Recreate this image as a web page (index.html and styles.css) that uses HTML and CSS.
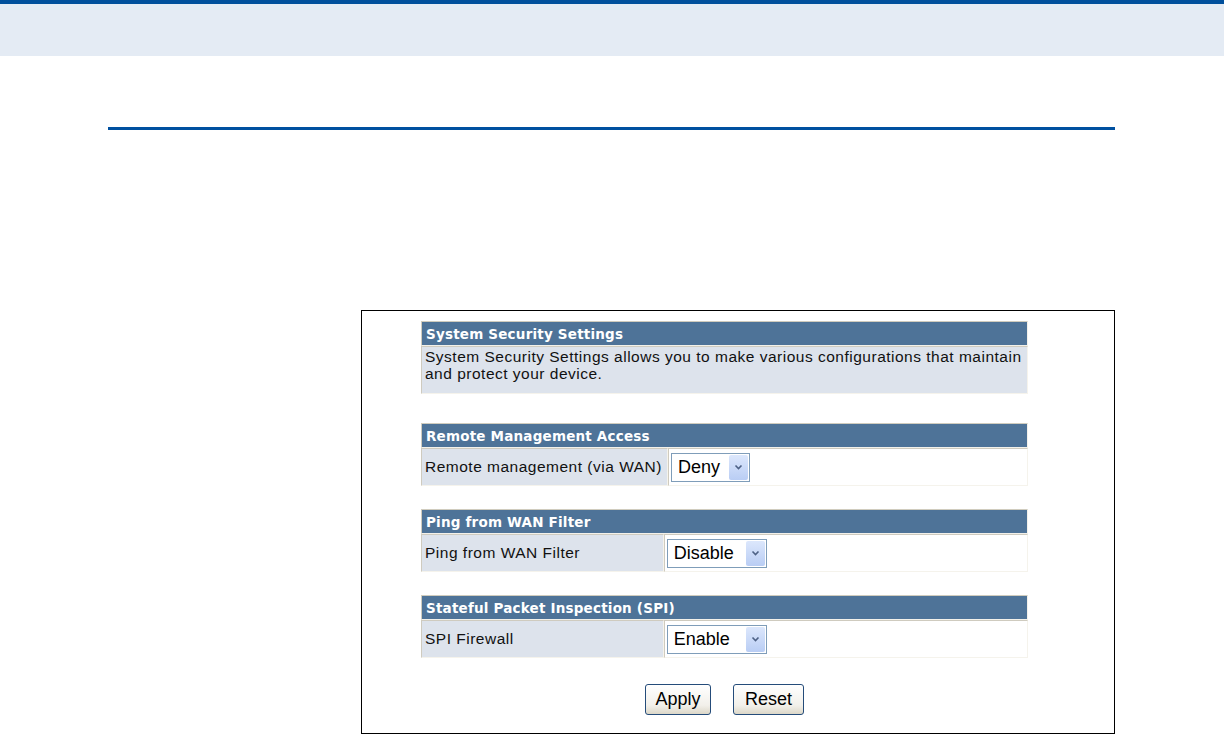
FILE: index.html
```html
<!DOCTYPE html>
<html>
<head>
<meta charset="utf-8">
<link rel="stylesheet" href="styles.css">
</head>
<body>
<div class="band"></div>
<div class="rule"></div>
<div class="panel">
  <table class="sec first">
    <tr><th colspan="2">System Security Settings</th></tr>
    <tr><td colspan="2" class="desc">System Security Settings allows you to make various configurations that maintain and protect your device.</td></tr>
  </table>
  <table class="sec">
    <tr><th colspan="2">Remote Management Access</th></tr>
    <tr><td class="lbl">Remote management (via WAN)</td><td class="val"><span class="sel w-deny"><span class="opt">Deny</span><span class="btn"><svg width="9" height="6" viewBox="0 0 9 6"><path d="M1.5 1.5 L4.5 4.5 L7.5 1.5" fill="none" stroke="#4d6185" stroke-width="1.6"/></svg></span></span></td></tr>
  </table>
  <table class="sec">
    <tr><th colspan="2">Ping from WAN Filter</th></tr>
    <tr><td class="lbl">Ping from WAN Filter</td><td class="val"><span class="sel w-dis"><span class="opt">Disable</span><span class="btn"><svg width="9" height="6" viewBox="0 0 9 6"><path d="M1.5 1.5 L4.5 4.5 L7.5 1.5" fill="none" stroke="#4d6185" stroke-width="1.6"/></svg></span></span></td></tr>
  </table>
  <table class="sec last">
    <tr><th colspan="2">Stateful Packet Inspection (SPI)</th></tr>
    <tr><td class="lbl">SPI Firewall</td><td class="val"><span class="sel w-dis"><span class="opt">Enable</span><span class="btn"><svg width="9" height="6" viewBox="0 0 9 6"><path d="M1.5 1.5 L4.5 4.5 L7.5 1.5" fill="none" stroke="#4d6185" stroke-width="1.6"/></svg></span></span></td></tr>
  </table>
  <div class="actions">
    <button class="xp apply">Apply</button>
    <button class="xp reset">Reset</button>
  </div>
</div>
</body>
</html>
```
FILE: styles.css
```css
html, body { margin: 0; padding: 0; background: #fff; }
body { font-family: "Liberation Sans", Arial, sans-serif; width: 1224px; height: 734px; overflow: hidden; }
.band { height: 52px; border-top: 4px solid #004f9c; background: #e4ebf4; }
.rule { margin: 71px 0 0 108px; width: 1007px; height: 3px; background: #0050a0; }
.panel {
  margin: 180px 0 0 361px; width: 754px; height: 424px;
  border: 1px solid #000; box-sizing: border-box;
  padding: 10px 0 0 59px;
}
.sec {
  width: 607px; border-collapse: separate; border-spacing: 0;
  margin-bottom: 23px;
}
.sec.first { margin-bottom: 29px; }
.sec.last { margin-bottom: 26px; }
.sec th {
  background: #4e7398; color: #fff; text-align: left;
  font-family: "DejaVu Sans", Verdana, sans-serif; font-weight: bold; font-size: 13.5px;
  letter-spacing: 0.2px; line-height: 16px;
  height: 25px; box-sizing: border-box; padding: 1px 0 0 4px;
  border: 1px solid #d0ccbe; border-right-color: #f3f1ea; border-bottom-color: #f3f1ea;
}
.sec td {
  border: 1px solid #cfcbbf; border-right-color: #f5f3ec; border-bottom-color: #f5f3ec;
  font-size: 15.5px; letter-spacing: 0.5px; color: #111; padding: 0 0 0 3px;
  line-height: 18px;
}
.sec td.desc {
  background: #dde3ec; padding: 1px 4px 10px 3px; line-height: 17px; height: 48px;
  box-sizing: border-box; vertical-align: top;
}
.sec td.lbl { background: #dde3ec; width: 40%; height: 38px; box-sizing: border-box; white-space: nowrap; padding-right: 5px; }
.sec td.val { background: #fff; padding-left: 2px; line-height: 0; }
.sel {
  display: inline-flex; align-items: stretch; height: 29px; box-sizing: border-box;
  border: 1px solid #7f9db9; background: #fff; vertical-align: middle;
  justify-content: space-between; letter-spacing: 0;
}
.w-deny { width: 79px; }
.w-dis { width: 100px; }
.opt { font-size: 18px; color: #000; padding: 0 0 0 6px; line-height: 27px; }
.btn {
  width: 19px; margin: 1px; display: flex; align-items: center; justify-content: center;
  background: linear-gradient(#dce7fc, #b9cdf4); border-radius: 2px;
}
.actions { display: flex; justify-content: center; gap: 22px; width: 607px; }
.xp {
  font-family: "Liberation Sans", Arial, sans-serif; font-size: 18px; color: #000;
  height: 31px; padding: 0; border: 1px solid #254c7a; border-radius: 3px;
  background: linear-gradient(#ffffff, #f2f0ea 70%, #dcd7c8);
}
.apply { width: 66px; }
.reset { width: 71px; }
```
